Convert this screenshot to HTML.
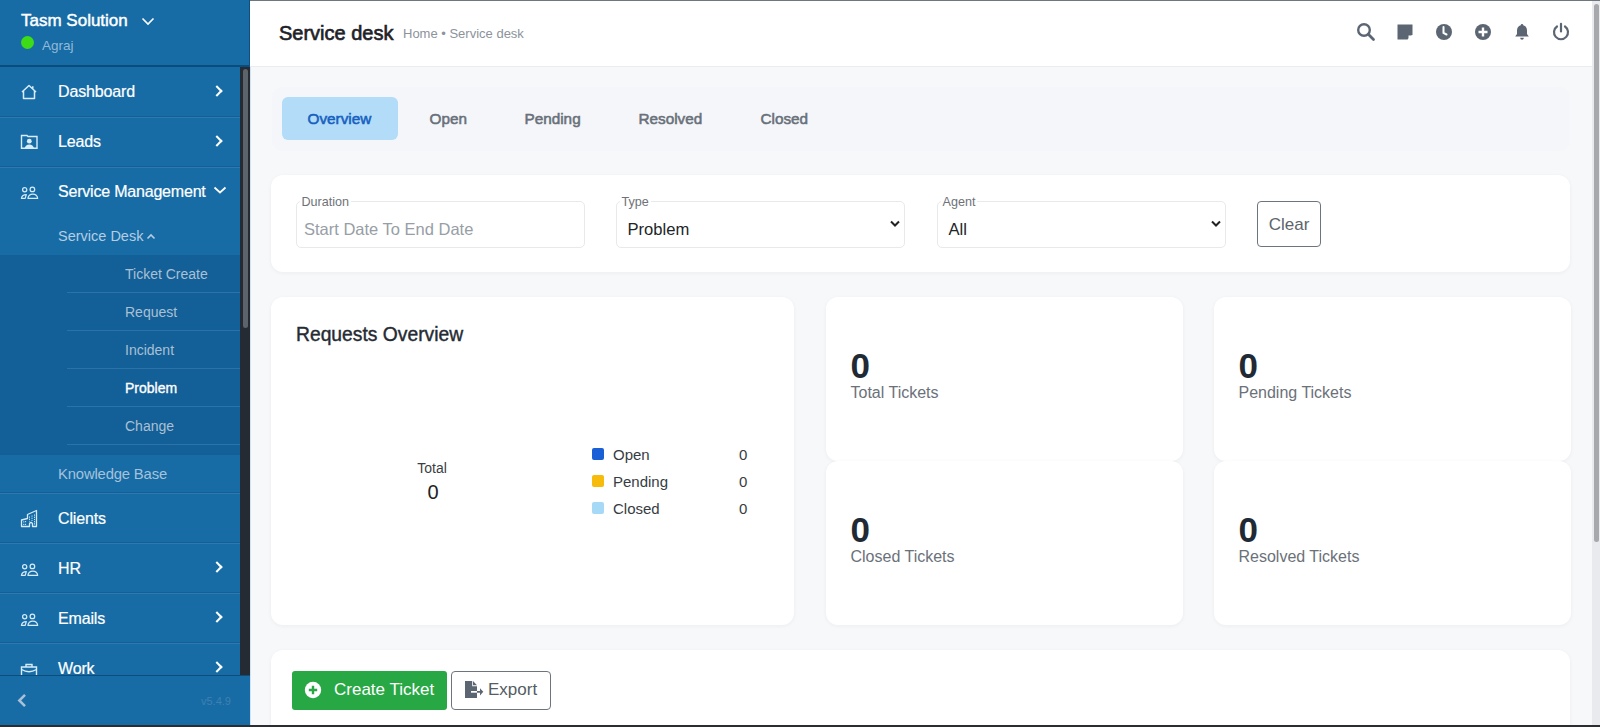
<!DOCTYPE html>
<html><head><meta charset="utf-8">
<style>
*{margin:0;padding:0;box-sizing:border-box}
html,body{width:1600px;height:727px;overflow:hidden;font-family:"Liberation Sans",sans-serif;background:#f7f8fa;position:relative}
.abs{position:absolute;white-space:nowrap}
#side{position:absolute;left:0;top:0;width:250px;height:727px;background:#176ca6;overflow:hidden}
#side .hdr{position:absolute;left:0;top:0;width:250px;height:67px;background:#176ca5;border-bottom:2px solid #0b4c7c}
.mi{position:absolute;left:0;width:240px;height:50px;color:#fff;font-size:16px}
.mi::before{content:"";position:absolute;left:0;top:0;width:240px;height:1px;background:#2a7bb3;box-shadow:0 -1px 0 #155f96}
.mi.nb::before{display:none}
.mi .t{position:absolute;left:58px;top:16px;line-height:18px;letter-spacing:-0.15px;-webkit-text-stroke:0.2px #fff}
.mi .chev{position:absolute;left:213px;top:19.5px;width:8px;height:8px;border-right:2px solid #fff;border-top:2px solid #fff;transform:rotate(45deg)}
.mi svg{position:absolute;left:20px;top:16px}
.sub{position:absolute;left:0;top:255px;width:240px;height:200px;background:#135f97}
.si{position:absolute;left:67px;width:173px;height:38px;border-bottom:1px solid #2a72a8;color:#aac0d4;font-size:14px}
.si span{position:absolute;left:58px;top:11px;line-height:16px}
#top{position:absolute;left:250px;top:0;width:1342px;height:67px;background:#fff;border-bottom:1px solid #e9ecf0}
.card{position:absolute;background:#fff;border-radius:12px;box-shadow:0 1px 4px rgba(30,40,60,0.05)}
.tab{position:absolute;top:98px;height:42px;font-size:15.3px;color:#68707a;line-height:42px;-webkit-text-stroke:0.55px #68707a}
.fs{position:absolute;top:201px;height:47px;border:1px solid #e7e9ec;border-radius:5px;background:#fff}
.fs .lab{position:absolute;left:2.5px;top:-7px;background:#fff;padding:0 2px;font-size:12.6px;color:#6e7278;line-height:15px}
.fs .val{position:absolute;left:10.5px;top:18px;font-size:16.6px;color:#212529;line-height:20px}
.fs .dd{position:absolute;right:3px;top:17px}
.stat .n{position:absolute;left:24.5px;top:51px;font-size:35px;font-weight:bold;color:#1f2a35;line-height:36px}
.stat .l{position:absolute;left:24.5px;top:87px;font-size:16px;color:#6b7179;line-height:18px}
.ticon{position:absolute;top:22px}
</style></head><body>
<div id="side">
  <div class="hdr">
    <div class="abs" style="left:21px;top:11px;font-size:17px;color:#fff;line-height:20px;-webkit-text-stroke:0.45px #fff">Tasm Solution</div>
    <svg class="abs" style="left:141px;top:17px" width="14" height="9" viewBox="0 0 14 9"><path d="M1.5 1.5 L7 7 L12.5 1.5" fill="none" stroke="#fff" stroke-width="1.6"/></svg>
    <div class="abs" style="left:20.5px;top:36px;width:13px;height:13px;border-radius:50%;background:#3ddc17"></div>
    <div class="abs" style="left:42px;top:38px;font-size:13.5px;color:#93b9d9;line-height:16px">Agraj</div>
  </div>
  <!-- Dashboard -->
  <div class="mi nb" style="top:67px">
    <svg width="18" height="17" viewBox="0 0 18 17"><path d="M2 9 L9 2.5 L16 9 M3.5 7.8 V15.5 H14.5 V7.8 M12.8 3.2 V6.5" fill="none" stroke="#d8ecfb" stroke-width="1.5" stroke-linejoin="round"/></svg>
    <div class="t">Dashboard</div><div class="chev"></div>
  </div>
  <div class="mi" style="top:117px">
    <svg width="18" height="17" viewBox="0 0 18 17"><path d="M1.5 2.5 H7 L8 3.5 H17 V15.3 H1.5 Z" fill="none" stroke="#d8ecfb" stroke-width="1.4"/><circle cx="9.3" cy="8.2" r="2.4" fill="#d8ecfb"/><path d="M4.6 15.3 Q5.5 11.5 9.3 11.5 Q13.1 11.5 14 15.3 Z" fill="#d8ecfb"/></svg>
    <div class="t">Leads</div><div class="chev"></div>
  </div>
  <div class="mi" style="top:167px;height:88px">
    <svg width="19" height="14" viewBox="0 0 19 14" style="top:19px"><circle cx="4.7" cy="3.8" r="2.1" fill="none" stroke="#d6ebfb" stroke-width="1.25"/><circle cx="12.4" cy="3.4" r="2.3" fill="none" stroke="#d6ebfb" stroke-width="1.25"/><path d="M6.3 8.6 Q2.2 8.6 1.4 12.3 H5.2 Z M7.9 12.3 Q8.6 8.1 12.8 8.1 Q17.1 8.1 17.7 12.3 Z" fill="none" stroke="#d6ebfb" stroke-width="1.2" stroke-linejoin="round"/></svg>
    <div class="t" style="letter-spacing:-0.2px">Service Management</div>
    <svg class="abs" style="left:213px;top:19px" width="14" height="9" viewBox="0 0 14 9"><path d="M1.5 1.5 L7 6.5 L12.5 1.5" fill="none" stroke="#fff" stroke-width="1.7"/></svg>
    <div class="abs" style="left:58px;top:61px;font-size:14.5px;color:#b5cde2;line-height:16px">Service Desk</div>
    <svg class="abs" style="left:146px;top:66px" width="10" height="7" viewBox="0 0 10 7"><path d="M1.5 5.5 L5 2 L8.5 5.5" fill="none" stroke="#b5cde2" stroke-width="1.6"/></svg>
  </div>
  <div class="sub">
    <div class="si" style="top:0"><span>Ticket Create</span></div>
    <div class="si" style="top:38px"><span>Request</span></div>
    <div class="si" style="top:76px"><span>Incident</span></div>
    <div class="si" style="top:114px"><span style="color:#fff;font-size:14px;-webkit-text-stroke:0.35px #fff">Problem</span></div>
    <div class="si" style="top:152px"><span>Change</span></div>
  </div>
  <div class="mi nb" style="top:455px;height:38px">
    <div class="t" style="top:10px;font-size:14.8px;color:#a6c2da;-webkit-text-stroke:0">Knowledge Base</div>
  </div>
  <div class="mi" style="top:493px">
    <svg width="18" height="20" viewBox="0 0 18 20" style="top:15px"><path d="M1.5 18.5 V12 L7.5 10.5 V6.5 L16.5 2.5 V18.5 H12.5 V15.5 Q11.8 14.5 11 14.5 Q10.2 14.5 9.5 15.5 V18.5 Z" fill="none" stroke="#d6ebfb" stroke-width="1.3" stroke-linejoin="round"/><path d="M3.8 13.3 v1.3 M5.6 13 v1.3 M3.8 15.8 v1.3 M5.6 15.8 v1.3 M9.5 8.5 v5 M12 7.5 v5.5 M14.5 6.5 v11" stroke="#d6ebfb" stroke-width="1" stroke-dasharray="1.2 1"/></svg>
    <div class="t" style="top:17px">Clients</div>
  </div>
  <div class="mi" style="top:543px">
    <svg width="19" height="14" viewBox="0 0 19 14" style="top:20px"><circle cx="4.7" cy="3.8" r="2.1" fill="none" stroke="#d6ebfb" stroke-width="1.25"/><circle cx="12.4" cy="3.4" r="2.3" fill="none" stroke="#d6ebfb" stroke-width="1.25"/><path d="M6.3 8.6 Q2.2 8.6 1.4 12.3 H5.2 Z M7.9 12.3 Q8.6 8.1 12.8 8.1 Q17.1 8.1 17.7 12.3 Z" fill="none" stroke="#d6ebfb" stroke-width="1.2" stroke-linejoin="round"/></svg>
    <div class="t" style="top:17px">HR</div><div class="chev"></div>
  </div>
  <div class="mi" style="top:593px">
    <svg width="19" height="14" viewBox="0 0 19 14" style="top:20px"><circle cx="4.7" cy="3.8" r="2.1" fill="none" stroke="#d6ebfb" stroke-width="1.25"/><circle cx="12.4" cy="3.4" r="2.3" fill="none" stroke="#d6ebfb" stroke-width="1.25"/><path d="M6.3 8.6 Q2.2 8.6 1.4 12.3 H5.2 Z M7.9 12.3 Q8.6 8.1 12.8 8.1 Q17.1 8.1 17.7 12.3 Z" fill="none" stroke="#d6ebfb" stroke-width="1.2" stroke-linejoin="round"/></svg>
    <div class="t" style="top:17px">Emails</div><div class="chev"></div>
  </div>
  <div class="mi" style="top:643px">
    <svg width="18" height="17" viewBox="0 0 18 17" style="top:19px"><path d="M1.5 16 V5 H16.5 V16 M1.5 7.5 Q9 12 16.5 7.5 M6 5 V2.5 H12 V5" fill="none" stroke="#d8ecfb" stroke-width="1.4"/></svg>
    <div class="t" style="top:17px">Work</div><div class="chev"></div>
  </div>
  <!-- scrollbar -->
  <div class="abs" style="left:240px;top:67px;width:10px;height:609px;background:#252b33"></div>
  <div class="abs" style="left:242.5px;top:69px;width:5px;height:259px;border-radius:3px;background:#5d636b"></div>
  <div class="abs" style="left:249px;top:0;width:1px;height:67px;background:#0e4f80"></div>
<!-- footer -->
  <div class="abs" style="left:0;top:675px;width:250px;height:50px;background:#176ca6;border-top:1px solid #0d4c7b"></div>
  <svg class="abs" style="left:16px;top:693px" width="12" height="15" viewBox="0 0 12 15"><path d="M9 1.8 L3.3 7.5 L9 13.2" fill="none" stroke="#a9c1d8" stroke-width="2.5"/></svg>
  <div class="abs" style="left:201px;top:695px;font-size:11px;color:#3f80b0;line-height:12px">v5.4.9</div>
</div>
<div class="abs" style="left:250px;top:0;width:1px;height:727px;background:#cfe3f3"></div>

<div id="top">
  <div class="abs" style="left:29px;top:22px;font-size:20px;color:#1e2228;line-height:22px;-webkit-text-stroke:0.65px #1e2228">Service desk</div>
  <div class="abs" style="left:153px;top:26px;font-size:13px;color:#8c939b;line-height:15px">Home • Service desk</div>
  <!-- icons -->
  <svg class="ticon" style="left:1106px" width="20" height="20" viewBox="0 0 20 20"><circle cx="8" cy="8" r="5.8" fill="none" stroke="#5c6673" stroke-width="2.4"/><path d="M12.3 12.3 L17.5 17.5" stroke="#5c6673" stroke-width="2.8" stroke-linecap="round"/></svg>
  <svg class="ticon" style="left:1145px" width="20" height="20" viewBox="0 0 20 20"><path d="M2.5 2.5 H17.5 V12.5 L12.5 17.5 H2.5 Z" fill="#5c6673"/><path d="M17.5 13.5 L13.5 17.5 V13.5 Z" fill="#fff"/></svg>
  <svg class="ticon" style="left:1184px" width="20" height="20" viewBox="0 0 20 20"><circle cx="10" cy="10" r="8" fill="#5c6673"/><path d="M9.5 5 V11 L12.5 12.5" fill="none" stroke="#fff" stroke-width="2" stroke-linecap="round"/></svg>
  <svg class="ticon" style="left:1223px" width="20" height="20" viewBox="0 0 20 20"><circle cx="10" cy="10" r="8" fill="#5c6673"/><path d="M10 5.5 V14.5 M5.5 10 H14.5" stroke="#fff" stroke-width="2.4"/></svg>
  <svg class="ticon" style="left:1262px" width="20" height="20" viewBox="0 0 20 20"><path d="M10 2 C10.8 2 11.3 2.6 11.3 3.3 C13.8 4 15 6 15 8.5 V12 L16.8 14.5 H3.2 L5 12 V8.5 C5 6 6.2 4 8.7 3.3 C8.7 2.6 9.2 2 10 2 Z" fill="#5c6673"/><path d="M8.2 15.8 H11.8 C11.8 17 11 17.8 10 17.8 C9 17.8 8.2 17 8.2 15.8 Z" fill="#5c6673"/></svg>
  <svg class="ticon" style="left:1301px" width="20" height="20" viewBox="0 0 20 20"><path d="M6 4.5 A7 7 0 1 0 14 4.5" fill="none" stroke="#5c6673" stroke-width="2.2" stroke-linecap="round"/><path d="M10 1.8 V9.5" stroke="#5c6673" stroke-width="2.2" stroke-linecap="round"/></svg>
</div>


<!-- tabs container -->
<div class="abs" style="left:272px;top:87px;width:1298px;height:64px;background:#f5f6f9;border-radius:10px"></div>
<div class="abs" style="left:282px;top:97px;width:116px;height:43px;background:#b2dcf8;border-radius:6px"></div>
<div class="tab" style="left:307.5px;color:#1660c0;-webkit-text-stroke:0.55px #1660c0">Overview</div>
<div class="tab" style="left:429.5px">Open</div>
<div class="tab" style="left:524.5px">Pending</div>
<div class="tab" style="left:638.5px">Resolved</div>
<div class="tab" style="left:760.5px">Closed</div>

<!-- filter card -->
<div class="card" style="left:271px;top:175px;width:1299px;height:97px"></div>
<div class="fs" style="left:296px;width:289px"><div class="lab">Duration</div><div class="val" style="left:7px;top:17px;color:#979ea6;font-size:16.5px">Start Date To End Date</div></div>
<div class="fs" style="left:616px;width:289px"><div class="lab">Type</div><div class="val">Problem</div>
  <svg class="dd" width="12" height="10" viewBox="0 0 12 10"><path d="M2 2.5 L6 6.5 L10 2.5" fill="none" stroke="#222" stroke-width="2"/></svg></div>
<div class="fs" style="left:937px;width:289px"><div class="lab">Agent</div><div class="val">All</div>
  <svg class="dd" width="12" height="10" viewBox="0 0 12 10"><path d="M2 2.5 L6 6.5 L10 2.5" fill="none" stroke="#222" stroke-width="2"/></svg></div>
<div class="abs" style="left:1257px;top:201px;width:64px;height:46px;border:1px solid #6c757d;border-radius:4px;font-size:17px;color:#5d646b;line-height:46px;text-align:center">Clear</div>

<!-- requests overview -->
<div class="card" style="left:271px;top:297px;width:523px;height:328px"></div>
<div class="abs" style="left:296px;top:324px;font-size:19.3px;color:#252b33;line-height:22px;-webkit-text-stroke:0.4px #252b33">Requests Overview</div>
<div class="abs" style="left:412px;top:460px;width:40px;text-align:center;font-size:14px;color:#3a3f45;line-height:16px">Total</div>
<div class="abs" style="left:413px;top:481px;width:40px;text-align:center;font-size:20px;color:#222;line-height:22px">0</div>
<div class="abs" style="left:592px;top:448px;width:12px;height:12px;border-radius:2px;background:#1a5fd6"></div>
<div class="abs" style="left:592px;top:475px;width:12px;height:12px;border-radius:2px;background:#f6bb0b"></div>
<div class="abs" style="left:592px;top:502px;width:12px;height:12px;border-radius:2px;background:#a6d9f5"></div>
<div class="abs" style="left:613px;top:446px;font-size:15px;color:#373c42;line-height:17px">Open</div>
<div class="abs" style="left:613px;top:473px;font-size:15px;color:#373c42;line-height:17px">Pending</div>
<div class="abs" style="left:613px;top:500px;font-size:15px;color:#373c42;line-height:17px">Closed</div>
<div class="abs" style="left:739px;top:446px;font-size:15px;color:#373c42;line-height:17px">0</div>
<div class="abs" style="left:739px;top:473px;font-size:15px;color:#373c42;line-height:17px">0</div>
<div class="abs" style="left:739px;top:500px;font-size:15px;color:#373c42;line-height:17px">0</div>

<!-- stat cards -->
<div class="card stat" style="left:826px;top:297px;width:357px;height:164px"><div class="n">0</div><div class="l">Total Tickets</div></div>
<div class="card stat" style="left:826px;top:461px;width:357px;height:164px"><div class="n">0</div><div class="l">Closed Tickets</div></div>
<div class="card stat" style="left:1214px;top:297px;width:357px;height:164px"><div class="n">0</div><div class="l">Pending Tickets</div></div>
<div class="card stat" style="left:1214px;top:461px;width:357px;height:164px"><div class="n">0</div><div class="l">Resolved Tickets</div></div>

<!-- bottom card -->
<div class="card" style="left:271px;top:650px;width:1299px;height:120px"></div>
<div class="abs" style="left:292px;top:671px;width:155px;height:39px;background:#28a745;border-radius:3px"></div>
<svg class="abs" style="left:304px;top:681px" width="18" height="18" viewBox="0 0 18 18"><circle cx="9" cy="9" r="8.2" fill="#fff"/><path d="M9 4.8 V13.2 M4.8 9 H13.2" stroke="#28a745" stroke-width="2.4"/></svg>
<div class="abs" style="left:334px;top:680px;font-size:17px;color:#fff;line-height:20px">Create Ticket</div>
<div class="abs" style="left:451px;top:671px;width:100px;height:39px;border:1px solid #6c757d;border-radius:4px;background:#fff"></div>
<svg class="abs" style="left:463px;top:680px" width="22" height="20" viewBox="0 0 22 20"><path d="M2 1 H9.2 V6.3 H14 V18 H2 Z" fill="#5c6673"/><path d="M10 1 L14 5.2 H10 Z" fill="#5c6673"/><rect x="8" y="11" width="6" height="1.7" fill="#fff"/><path d="M14 11 H17.5 V12.7 H14 Z M17 8.3 L20.3 11.85 L17 15.4 Z" fill="#5c6673"/></svg>
<div class="abs" style="left:488px;top:680px;font-size:17px;color:#555c63;line-height:20px">Export</div>

<!-- right scrollbar -->
<div class="abs" style="left:1592px;top:0;width:8px;height:727px;background:#e8eaee"></div>
<div class="abs" style="left:1593.5px;top:4px;width:5.5px;height:538px;background:#a6a8ab;border-radius:3px"></div>
<div class="abs" style="left:250px;top:0;width:1350px;height:1px;background:#6f767d"></div>
<!-- bottom line -->
<div class="abs" style="left:0;top:725px;width:1600px;height:2px;background:#2a2e33"></div>
</body></html>
